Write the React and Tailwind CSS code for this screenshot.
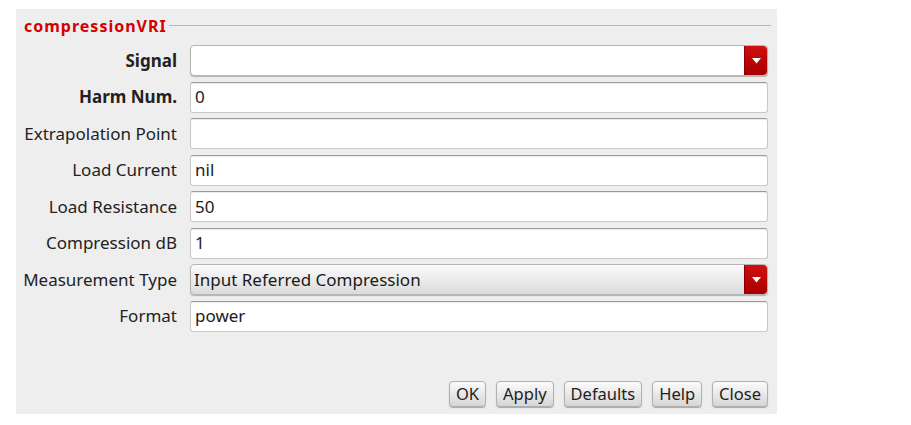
import React from "react";

const font = { fontFamily: '"Noto Sans", "DejaVu Sans", sans-serif' };

function Arrow() {
  return (
    <div className="w-[23px] self-stretch rounded-r-[4px] bg-gradient-to-b from-[#d20f0f] to-[#a80000] flex items-center justify-center border-l border-[#8a0000]">
      <svg width="9" height="6" viewBox="0 0 9 6">
        <path d="M0 0 L9 0 L4.5 5.5 Z" fill="#ffffff" />
      </svg>
    </div>
  );
}

function TextField({ value }) {
  return (
    <div className="flex-1 h-[31px] bg-white border border-[#c9c9c9] border-t-[#9a9a9a] rounded-[3px] flex items-center px-[4px] text-[17px] text-[#1a1a1a] shadow-[inset_0_1px_1px_rgba(0,0,0,0.08)]">
      {value}
    </div>
  );
}

function Combo({ value, gray }) {
  return (
    <div
      className={`flex-1 h-[31px] border border-[#b5b5b5] rounded-[4px] flex items-stretch text-[17px] text-[#1a1a1a] shadow-[0_1px_1px_rgba(0,0,0,0.25)] ${
        gray ? "bg-gradient-to-b from-[#fafafa] to-[#dcdcdc]" : "bg-white"
      }`}
    >
      <div className="flex-1 flex items-center px-[3px]">{value}</div>
      <Arrow />
    </div>
  );
}

function Row({ label, bold, children }) {
  return (
    <div className="flex items-center">
      <div
        className={`w-[162px] text-right text-[17px] text-[#222] pr-[1px] whitespace-nowrap ${bold ? "font-bold" : ""}`}
      >
        {label}
      </div>
      <div className="flex-1 flex ml-[12px] mr-[9px]">{children}</div>
    </div>
  );
}

function Btn({ children }) {
  return (
    <div className="h-[26px] px-[6px] flex items-center rounded-[4px] border border-[#b0b0b0] bg-gradient-to-b from-[#fbfbfb] to-[#d6d6d6] text-[16.5px] text-[#222] shadow-[0_1px_1px_rgba(0,0,0,0.3)]">
      {children}
    </div>
  );
}

export default function App() {
  return (
    <div className="w-[911px] h-[425px] bg-white" style={font}>
      <div className="absolute left-[16px] top-[9px] w-[761px] h-[405px] bg-[#eeeeee] flex flex-col">
        <div className="flex items-center pl-[8px] pr-[6px] pt-[5px] h-[28px]">
          <span className="text-[16px] font-bold text-[#d40000] leading-none tracking-[1px]">compressionVRI</span>
          <div className="flex-1 ml-[2px] h-[1px] bg-[#b8b8b8]" />
        </div>
        <div className="flex flex-col gap-[5.5px] mt-[8px]">
          <Row label="Signal" bold>
            <Combo value="" />
          </Row>
          <Row label="Harm Num." bold>
            <TextField value="0" />
          </Row>
          <Row label="Extrapolation Point">
            <TextField value="" />
          </Row>
          <Row label="Load Current">
            <TextField value="nil" />
          </Row>
          <Row label="Load Resistance">
            <TextField value="50" />
          </Row>
          <Row label="Compression dB">
            <TextField value="1" />
          </Row>
          <Row label="Measurement Type">
            <Combo value="Input Referred Compression" gray />
          </Row>
          <Row label="Format">
            <TextField value="power" />
          </Row>
        </div>
        <div className="flex-1" />
        <div className="flex justify-end gap-[10px] pr-[9px] pb-[7px]">
          <Btn>OK</Btn>
          <Btn>Apply</Btn>
          <Btn>Defaults</Btn>
          <Btn>Help</Btn>
          <Btn>Close</Btn>
        </div>
      </div>
    </div>
  );
}
